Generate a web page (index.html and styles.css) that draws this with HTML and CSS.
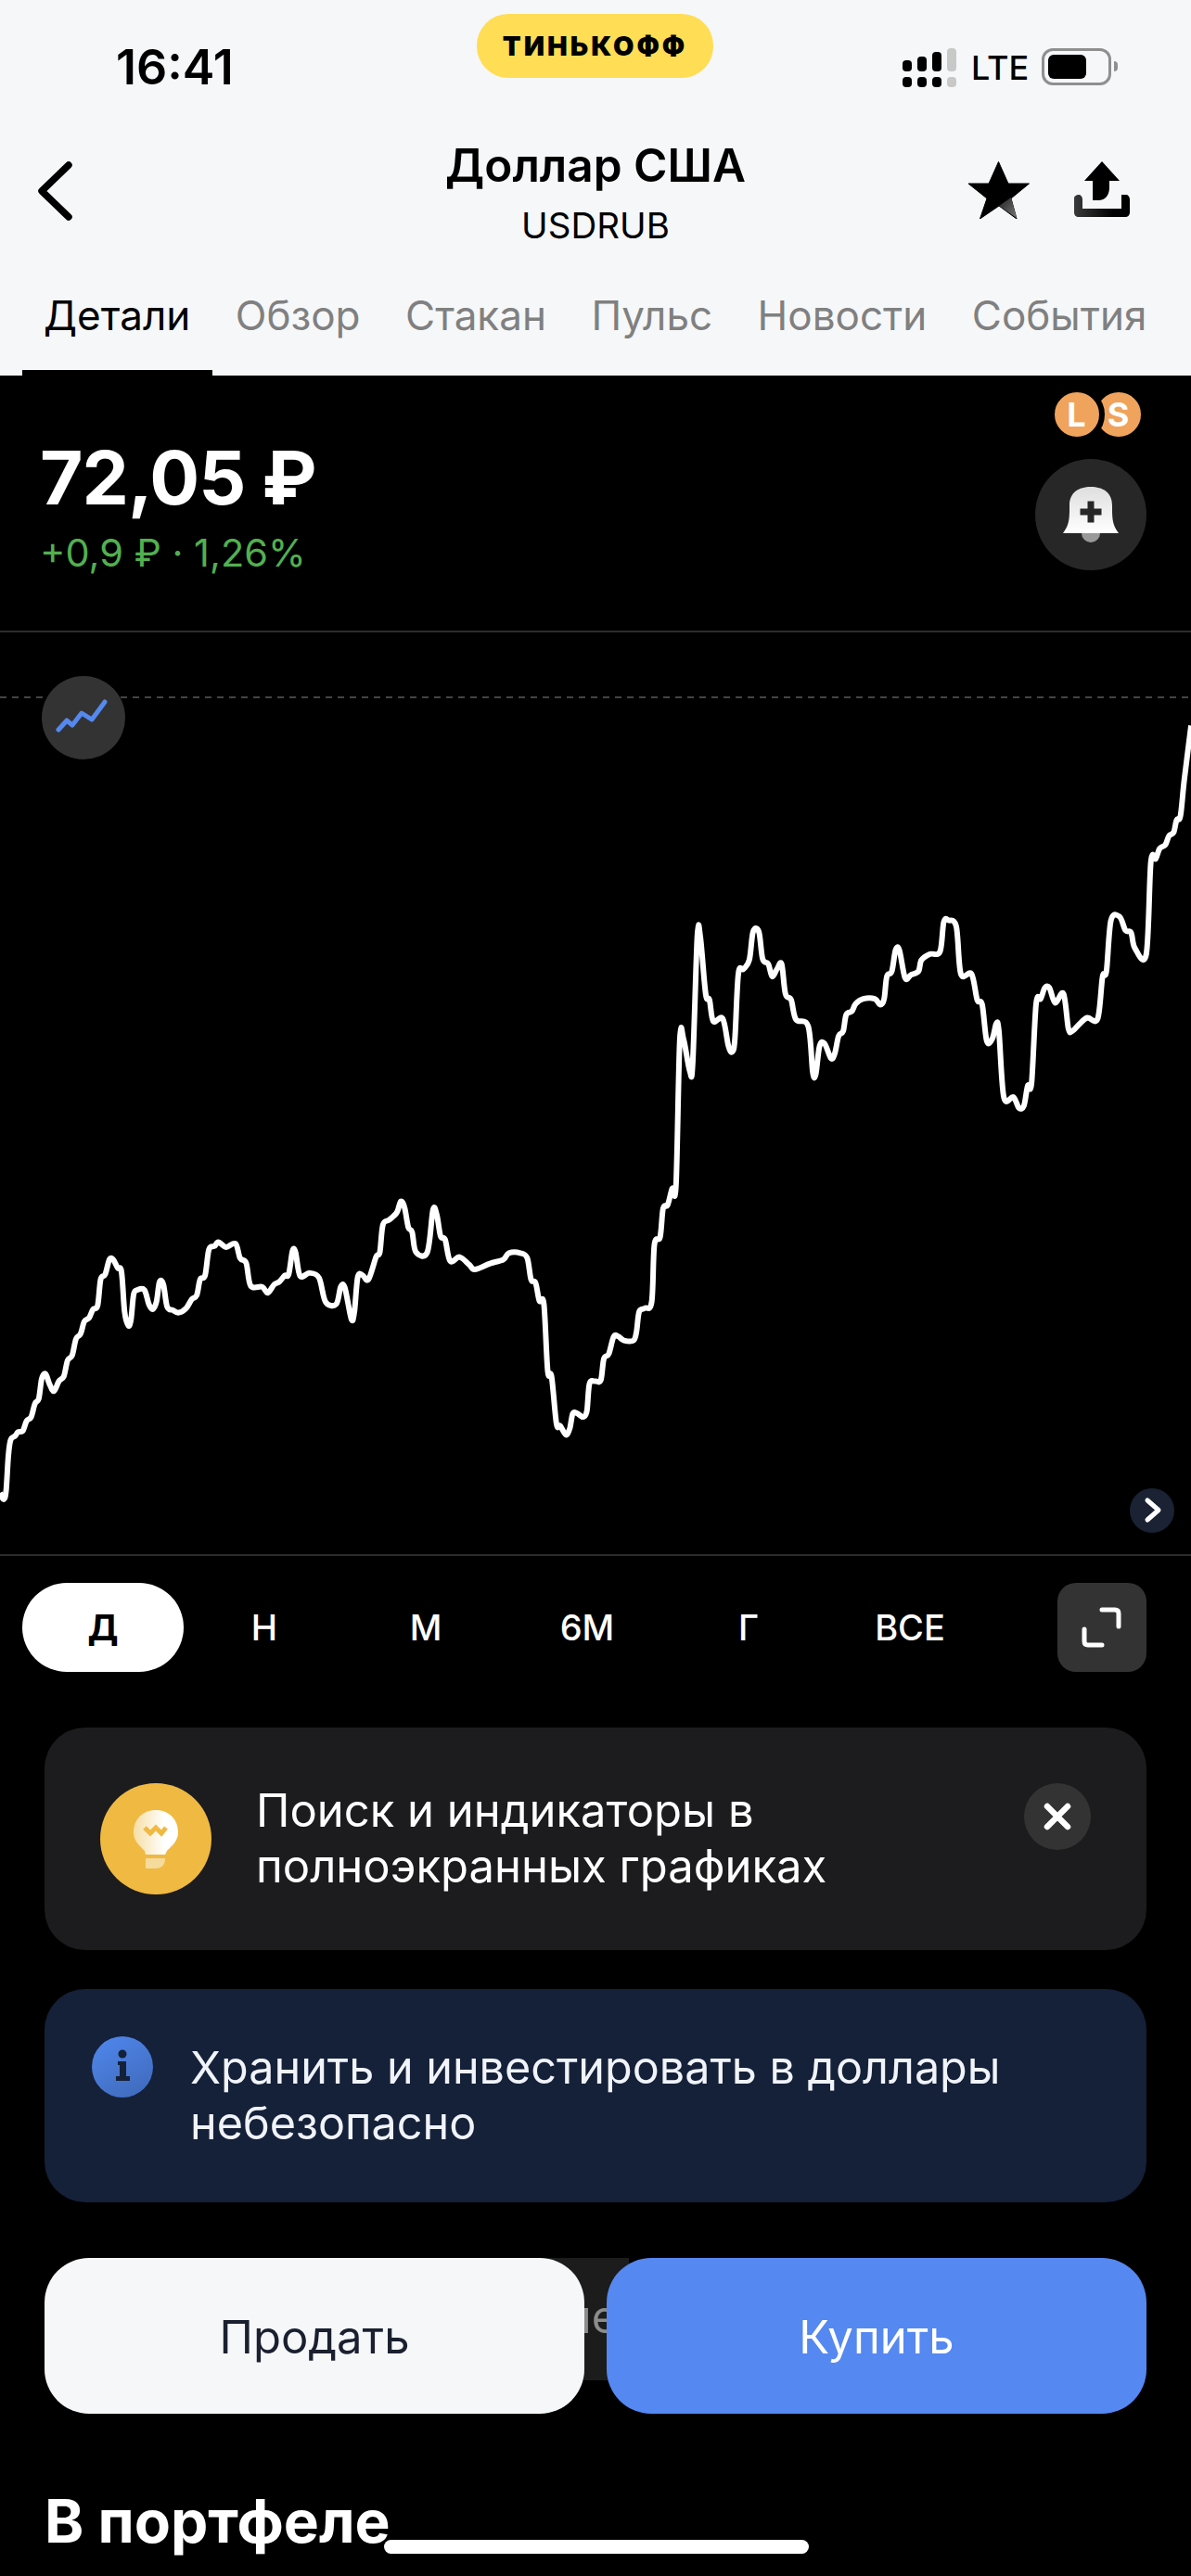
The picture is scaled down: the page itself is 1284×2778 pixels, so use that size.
FILE: index.html
```html
<!DOCTYPE html>
<html lang="ru">
<head>
  <meta charset="UTF-8">
  <meta name="viewport" content="width=device-width, initial-scale=1.0">
  <title>Доллар США</title>
  <link rel="stylesheet" href="styles.css">
</head>
<body>
  <div class="screen">
    <header class="top">
      <div class="status">
        <div class="time">16:41</div>
        <div class="brand">ТИНЬКОФФ</div>
        <div class="status-right">
          <div class="signal">
            <span class="bar bar-1"></span>
            <span class="bar bar-2"></span>
            <span class="bar bar-3"></span>
            <span class="bar bar-4"></span>
          </div>
          <div class="lte">LTE</div>
          <div class="battery"><span class="battery-level"></span></div>
          <span class="battery-nub"></span>
        </div>
      </div>

      <div class="nav">
        <svg class="back" width="40" height="66" viewBox="0 0 40 66">
          <path d="M34 5 L5 33 L34 61" fill="none" stroke="#000" stroke-width="7.5" stroke-linecap="round" stroke-linejoin="round"/>
        </svg>
        <div class="nav-title">
          <h1>Доллар США</h1>
          <div class="ticker">USDRUB</div>
        </div>
        <div class="nav-actions">
          <svg width="66" height="62" viewBox="0 0 66 62">
            <defs>
              <linearGradient id="starShade" x1="0" y1="0" x2="1" y2="1">
                <stop offset="0" stop-color="#222"/>
                <stop offset="1" stop-color="#777"/>
              </linearGradient>
            </defs>
            <path d="M32.5 0.5 L43 24 L65.500 24 L46 40 L52 62 L33 48 L12.500 62 L20 40 L0 24 L22 24 Z" fill="#000" stroke="#000" stroke-width="1" stroke-linejoin="round"/>
            <path d="M33 48 L46 39 L52 61 Z" fill="url(#starShade)"/>
          </svg>
          <svg width="60" height="60" viewBox="0 0 60 60">
            <defs>
              <linearGradient id="trayShade" x1="0" y1="0" x2="1" y2="0">
                <stop offset="0" stop-color="#3a3a3a"/>
                <stop offset="0.7" stop-color="#000"/>
              </linearGradient>
            </defs>
            <path d="M30 0 L49 21 L38 21 V28 C38 36 34 42 26 42 H20 V21 H11 Z" fill="#000"/>
            <path d="M0 40 C0 37 3 36 5 36 C7 36 9 38 9 41 V51 H51 V36 H56 C58 36 60 38 60 41 V55 C60 58 58 60 55 60 H5 C2 60 0 58 0 55 Z" fill="url(#trayShade)"/>
          </svg>
        </div>
      </div>

      <nav class="tabs">
        <a class="tab active">Детали</a>
        <a class="tab">Обзор</a>
        <a class="tab">Стакан</a>
        <a class="tab">Пульс</a>
        <a class="tab">Новости</a>
        <a class="tab">События</a>
      </nav>
    </header>

    <section class="quote">
      <div>
        <div class="price">72,05 ₽</div>
        <div class="change">+0,9 ₽ · 1,26%</div>
      </div>
      <div class="quote-side">
        <div class="badges">
          <span class="badge badge-l">L</span>
          <span class="badge badge-s">S</span>
        </div>
        <div class="bell">
          <svg width="60" height="60" viewBox="0 0 60 60">
            <defs>
              <linearGradient id="bellShade" x1="0" y1="0" x2="0" y2="1">
                <stop offset="0" stop-color="#dedede"/>
                <stop offset="1" stop-color="#fff"/>
              </linearGradient>
            </defs>
            <circle cx="30" cy="50" r="10" fill="#999"/>
            <path d="M0 50 C6 42 7 36 7 24 V20 C7 6 17 0 30 0 S53 6 53 20 V24 C53 36 54 42 60 50 Z" fill="url(#bellShade)"/>
            <path d="M26.500 15.500 H33.500 V23.500 H41.500 V30.500 H33.500 V38.500 H26.500 V30.500 H18.500 V23.500 H26.500 Z" fill="#272727"/>
          </svg>
        </div>
      </div>
    </section>

    <section class="chart">
      <svg id="chart" class="chart-svg" width="1284" height="994" viewBox="0 682 1284 994">
        <line class="chart-level" x1="0" y1="752" x2="1284" y2="752"/>
      </svg>
      <div class="chart-mode">
        <svg width="90" height="90" viewBox="0 0 90 90">
          <path d="M18 58 L27 48 L33 53 L43 40 L54 47 L68 28" fill="none" stroke="#5589ee" stroke-width="5" stroke-linecap="round" stroke-linejoin="round"/>
        </svg>
      </div>
      <div class="chart-next">
        <svg width="48" height="48" viewBox="0 0 48 48">
          <path d="M19 13 L31 23.500 L19 34" fill="none" stroke="#fff" stroke-width="5" stroke-linecap="round" stroke-linejoin="round"/>
        </svg>
      </div>
    </section>

    <div class="periods">
      <span class="period active">Д</span>
      <span class="period">Н</span>
      <span class="period">М</span>
      <span class="period">6М</span>
      <span class="period">Г</span>
      <span class="period">ВСЕ</span>
      <div class="expand">
        <svg width="96" height="96" viewBox="0 0 96 96">
          <path d="M48 29 H62 Q66 29 66 33 V47 M29 50 V63 Q29 67 33 67 H48" fill="none" stroke="#fff" stroke-width="5" stroke-linecap="round"/>
        </svg>
      </div>
    </div>

    <div class="card card-tip">
      <div class="tip-icon">
        <svg width="48" height="63" viewBox="0 0 48 63">
          <defs>
            <linearGradient id="bulbShade" x1="0" y1="0" x2="1" y2="0">
              <stop offset="0" stop-color="#f6dfa5"/>
              <stop offset="0.7" stop-color="#fff"/>
            </linearGradient>
          </defs>
          <path d="M24 0 C38 0 48 10 48 24 C48 33 42 38 36 44 L34 48 H13 L12 44 C6 38 0 33 0 24 C0 10 10 0 24 0 Z" fill="url(#bulbShade)"/>
          <path d="M13 52 H34 C34 59 30 63 24 63 H13 Z" fill="#f5dc9c"/>
          <path d="M12 19 L18 25 L24 19 L30 25 L35 19" fill="none" stroke="#f0b942" stroke-width="5"/>
        </svg>
      </div>
      <p class="card-text">Поиск и индикаторы в<br>полноэкранных графиках</p>
      <div class="tip-close">
        <svg width="72" height="72" viewBox="0 0 72 72">
          <path d="M25 25 L47 47 M47 25 L25 47" stroke="#fff" stroke-width="6.500" stroke-linecap="round"/>
        </svg>
      </div>
    </div>

    <div class="card card-warn">
      <div class="info-icon">
        <svg width="66" height="66" viewBox="0 0 66 66">
          <circle cx="33" cy="19" r="4.500" fill="#152039"/>
          <path d="M28 27 H37 V43 H41 V48 H26 V43 H30 V31 H28 Z" fill="#152039"/>
        </svg>
      </div>
      <p class="card-text">Хранить и инвестировать в доллары<br>небезопасно</p>
    </div>

    <div class="actions">
      <div class="hint"><span>не</span></div>
      <button class="btn btn-sell">Продать</button>
      <button class="btn btn-buy">Купить</button>
    </div>

    <h2 class="portfolio">В портфеле</h2>

    <div class="home-indicator"></div>
  </div>

  <script src="chart.js"></script>
</body>
</html>
```

FILE: styles.css
```css
* {
  box-sizing: border-box;
}
body {
  margin: 0;
  background: #000;
  font-family: Inter, "Liberation Sans", sans-serif;
}
.screen {
  position: relative;
  width: 1284px;
  height: 2778px;
  overflow: hidden;
  background: #000;
  color: #fff;
}

/* top bar */
.top {
  height: 405px;
  background: #f6f7f9;
  color: #000;
}
.status {
  display: grid;
  grid-template-columns: 514px 255px 1fr;
  height: 110px;
}
.time {
  margin-top: 43px;
  padding-left: 125px;
  font-size: 52px;
  line-height: 60px;
  font-weight: 600;
}
.brand {
  margin-top: 15px;
  height: 69px;
  border-radius: 34px;
  background: #ffdd55;
  text-align: center;
  font-size: 29px;
  line-height: 69px;
  font-weight: 900;
  letter-spacing: 3px;
}
.status-right {
  display: flex;
  align-items: flex-start;
  margin-top: 52px;
  padding-left: 204px;
}
.signal {
  display: flex;
  align-items: flex-end;
  gap: 6px;
  height: 42px;
  padding-bottom: 17px;
}
.bar {
  position: relative;
  width: 10px;
  border-radius: 4px;
  background: #000;
}
.bar::after {
  content: "";
  position: absolute;
  left: 0;
  bottom: -17px;
  width: 10px;
  height: 11px;
  border-radius: 4px;
  background: inherit;
}
.bar-1 { height: 12px; }
.bar-2 { height: 16px; }
.bar-3 { height: 21px; }
.bar-4 { height: 25px; background: #c8c8c8; }
.lte {
  margin-left: 16px;
  font-size: 36px;
  line-height: 42px;
  font-weight: 500;
}
.battery {
  margin-left: 14px;
  width: 75px;
  height: 40px;
  padding: 4px;
  border: 3px solid #8f8f8f;
  border-radius: 12px;
}
.battery-level {
  display: block;
  width: 41px;
  height: 100%;
  border-radius: 6px;
  background: #000;
}
.battery-nub {
  margin-top: 14px;
  margin-left: 3px;
  width: 4px;
  height: 11px;
  border-radius: 0 6px 6px 0;
  background: #8f8f8f;
}
.nav {
  display: grid;
  grid-template-columns: 1fr auto 1fr;
  height: 180px;
}
.back {
  margin: 63px 0 0 40px;
}
.nav-title {
  padding-top: 38px;
  text-align: center;
}
h1 {
  margin: 0;
  font-size: 49.500px;
  line-height: 60px;
  font-weight: 600;
}
.ticker {
  margin-top: 13px;
  font-size: 38.500px;
  line-height: 44px;
}
.nav-actions {
  display: flex;
  justify-content: flex-end;
  gap: 48px;
  padding: 64px 66px 0 0;
}
.tabs {
  display: flex;
  gap: 48.500px;
  padding-left: 47px;
  height: 115px;
  font-size: 44px;
  line-height: 100px;
  color: #808080;
}
.tab.active {
  position: relative;
  color: #000;
}
.tab.active::after {
  content: "";
  position: absolute;
  left: -23px;
  right: -24px;
  bottom: 0;
  height: 6px;
  background: #000;
}

/* price */
.quote {
  display: flex;
  justify-content: space-between;
  height: 277px;
  padding: 0 48px 0 43px;
  border-bottom: 2px solid #2c2c2c;
}
.price {
  margin-top: 60px;
  font-size: 80px;
  line-height: 100px;
  font-weight: 700;
  letter-spacing: -1px;
}
.change {
  margin-top: 6px;
  font-size: 41.500px;
  line-height: 50px;
  color: #52b04f;
}
.badges {
  display: flex;
  justify-content: center;
  margin-top: 12px;
  padding-left: 14px;
}
.badge {
  width: 60px;
  height: 60px;
  border: 6px solid #000;
  border-radius: 50%;
  background: #f0a35c;
  color: #fff;
  text-align: center;
  font-size: 36px;
  line-height: 48px;
  font-weight: 700;
}
.badge-l {
  position: relative;
  z-index: 1;
}
.badge-s {
  margin-left: -15px;
}
.bell {
  display: flex;
  align-items: center;
  justify-content: center;
  margin-top: 18px;
  width: 120px;
  height: 120px;
  border-radius: 50%;
  background: #272727;
}

/* chart */
.chart {
  position: relative;
  height: 996px;
  border-bottom: 2px solid #2c2c2c;
}
.chart-svg {
  display: block;
}
.chart-level {
  stroke: #444;
  stroke-width: 2;
  stroke-dasharray: 7 6;
}
.chart-mode {
  position: absolute;
  left: 45px;
  top: 47px;
  width: 90px;
  height: 90px;
  border-radius: 50%;
  background: #333;
}
.chart-next {
  position: absolute;
  left: 1218px;
  top: 923px;
  width: 48px;
  height: 48px;
  border-radius: 50%;
  background: #1a2233;
}
.chart svg {
  display: block;
}

/* periods */
.periods {
  display: flex;
  align-items: center;
  margin-top: 29px;
  padding: 0 48px 0 24px;
}
.period {
  width: 174px;
  height: 96px;
  border-radius: 48px;
  text-align: center;
  font-size: 38px;
  line-height: 96px;
  font-weight: 500;
}
.period.active {
  background: #fff;
  color: #000;
  font-weight: 700;
}
.expand {
  margin-left: auto;
  width: 96px;
  height: 96px;
  border-radius: 20px;
  background: #333;
}

/* cards */
.card {
  display: flex;
  margin: 0 48px;
  border-radius: 44px;
}
.card-text {
  margin: 0;
  font-size: 48.500px;
  line-height: 60px;
}
.card-tip {
  position: relative;
  align-items: center;
  margin-top: 60px;
  height: 240px;
  padding-left: 60px;
  background: #1c1c1e;
}
.tip-icon {
  display: flex;
  flex: none;
  align-items: center;
  justify-content: center;
  width: 120px;
  height: 120px;
  border-radius: 50%;
  background: #f0b942;
}
.card-tip .card-text {
  margin-left: 48px;
  font-size: 49px;
}
.tip-close {
  position: absolute;
  right: 60px;
  top: 60px;
  width: 72px;
  height: 72px;
  border-radius: 50%;
  background: #333;
}
.card-warn {
  margin-top: 42px;
  height: 230px;
  padding: 51px 0 0 51px;
  background: #152039;
}
.info-icon {
  flex: none;
  width: 66px;
  height: 66px;
  border-radius: 50%;
  background: linear-gradient(150deg, #5088ee, #3f68b8);
}
.card-warn .card-text {
  margin: 4px 0 0 40px;
  color: #f0f3f8;
}

/* buy and sell */
.actions {
  position: relative;
  display: flex;
  gap: 24px;
  margin: 60px 48px 0;
}
.hint {
  position: absolute;
  left: 540px;
  top: 0;
  width: 90px;
  height: 132px;
  background: #1c1c1c;
  color: #8c8c8c;
  font-size: 48.500px;
  line-height: 128px;
  text-align: right;
}
.hint span {
  margin-right: 12px;
}
.btn {
  position: relative;
  flex: 1;
  height: 168px;
  padding-top: 3px;
  border: none;
  border-radius: 48px;
  font-family: inherit;
  font-size: 49px;
}
.btn-sell {
  background: #f6f7f9;
  color: #1b2030;
}
.btn-buy {
  background: #5588f0;
  color: #fff;
}
.portfolio {
  margin: 78px 0 0 48px;
  font-size: 64px;
  line-height: 76px;
  font-weight: 700;
}
.home-indicator {
  position: absolute;
  left: 414px;
  top: 2739px;
  width: 458px;
  height: 15px;
  border-radius: 8px;
  background: #fff;
}
```

FILE: chart.js
```js
// traced from the price history, in two halves; x and y are scaled below
const leftHalf = [[0,1475],[10,1488],[16,1470],[22,1400],[28,1368],[40,1360],[48,1352],[60,1350],[70,1330],[82,1322],[92,1295],[102,1285],[110,1245],[120,1235],[130,1255],[142,1270],[155,1250],[168,1240],[178,1208],[190,1198],[200,1165],[212,1155],[222,1130],[235,1122],[245,1105],[257,1098],[265,1045],[277,1035],[288,1005],[298,1005],[310,1022],[320,1030],[328,1110],[338,1138],[345,1125],[352,1075],[362,1066],[380,1066],[392,1095],[402,1105],[412,1090],[420,1050],[430,1055],[440,1100],[455,1107],[470,1112],[490,1103],[505,1085],[518,1077],[527,1045],[540,1037],[550,985],[565,978],[575,970],[595,980],[620,973],[632,1002],[648,1012],[660,1058],[690,1060],[705,1072],[722,1055],[735,1050],[750,1037],[760,1035],[770,988],[778,990],[790,1038],[815,1032],[840,1042],[857,1090],[885,1095],[897,1060],[908,1062],[925,1125],[933,1110],[942,1040],[955,1037],[970,1045],[990,1000],[1000,990],[1008,935],[1025,925],[1045,910],[1055,888],[1065,900],[1075,940],[1085,950],[1095,990],[1125,990],[1140,905],[1150,915],[1160,958],[1172,965],[1185,1008],[1210,1000],[1235,1015],[1250,1025],[1290,1013],[1325,1005],[1340,992],[1370,992],[1388,1002],[1398,1045],[1410,1052],[1420,1088],[1432,1095],[1442,1230],[1452,1240],[1465,1335],[1475,1340],[1490,1358],[1500,1345],[1508,1315],[1520,1315],[1535,1322],[1545,1310],[1552,1255]];
const rightHalf = [[0,1250],[14,1248],[22,1205],[35,1195],[48,1160],[60,1160],[75,1168],[100,1168],[108,1150],[115,1110],[130,1103],[148,1090],[155,975],[170,960],[178,902],[190,895],[202,862],[212,855],[222,562],[232,562],[248,625],[256,610],[268,355],[276,355],[290,470],[300,482],[310,525],[335,520],[350,575],[360,587],[367,560],[376,430],[390,420],[405,402],[415,345],[430,345],[440,400],[455,410],[465,435],[478,420],[490,410],[500,470],[515,482],[528,522],[560,535],[572,628],[580,632],[590,575],[603,570],[620,600],[630,590],[640,555],[652,545],[660,512],[675,505],[685,490],[705,480],[735,480],[750,492],[760,480],[767,435],[780,425],[790,382],[800,382],[815,438],[830,432],[850,425],[858,402],[880,390],[907,385],[917,325],[930,322],[950,335],[962,430],[990,430],[1005,482],[1018,492],[1030,565],[1045,560],[1055,530],[1062,545],[1075,678],[1100,678],[1115,700],[1128,695],[1138,655],[1148,650],[1160,490],[1172,480],[1183,458],[1195,458],[1210,488],[1232,470],[1245,540],[1255,545],[1275,530],[1295,518],[1322,520],[1335,435],[1345,425],[1357,322],[1380,315],[1395,342],[1410,347],[1420,378],[1450,390],[1462,205],[1475,198],[1485,178],[1500,170],[1510,152],[1522,145],[1530,120],[1540,112],[1550,40],[1568,-70]];

const toPage = (p, offset) => [offset + p[0] / 2.442, 820 + p[1] / 1.867];
const points = leftHalf.map(p => toPage(p, 0)).concat(rightHalf.map(p => toPage(p, 642)));

// catmull-rom through the points so the corners come out soft
let d = 'M' + points[0][0].toFixed(1) + ' ' + points[0][1].toFixed(1);
for (let i = 0; i < points.length - 1; i++) {
  const p0 = points[Math.max(i - 1, 0)];
  const p1 = points[i];
  const p2 = points[i + 1];
  const p3 = points[Math.min(i + 2, points.length - 1)];
  const c1x = p1[0] + (p2[0] - p0[0]) / 6;
  const c1y = p1[1] + (p2[1] - p0[1]) / 6;
  const c2x = p2[0] - (p3[0] - p1[0]) / 6;
  const c2y = p2[1] - (p3[1] - p1[1]) / 6;
  d += 'C' + [c1x, c1y, c2x, c2y, p2[0], p2[1]].map(n => n.toFixed(1)).join(' ');
}

const line = document.createElementNS('http://www.w3.org/2000/svg', 'path');
line.setAttribute('d', d);
line.setAttribute('fill', 'none');
line.setAttribute('stroke', '#fff');
line.setAttribute('stroke-width', '6');
line.setAttribute('stroke-linejoin', 'round');
document.getElementById('chart').appendChild(line);
```
